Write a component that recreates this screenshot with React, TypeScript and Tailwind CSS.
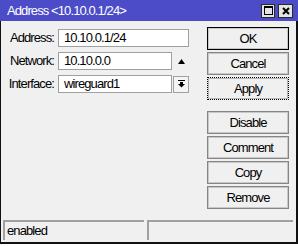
import React from 'react';

const font = "font-['Liberation_Sans',Arial,sans-serif] text-[13px] tracking-[-0.9px] text-black";

const FormRow: React.FC<{ label: string; children: React.ReactNode }> = ({ label, children }) => (
  <>
    <span className="flex h-[18px] items-center justify-end">{label}</span>
    <div className="flex h-[18px] items-center gap-[1px]">{children}</div>
  </>
);

const Field: React.FC<{ value: string; width: string }> = ({ value, width }) => (
  <div className={`flex h-[18px] items-center border border-[#a0a0a0] bg-white pl-[5px] ${width}`}>{value}</div>
);

const Btn: React.FC<{ label: string; kind?: 'default' | 'focus' }> = ({ label, kind }) => {
  let cls = 'border border-[#858585] shadow-[inset_0_0_0_1px_#c8c8c8]';
  if (kind === 'default') cls = 'border border-black shadow-[inset_0_0_0_1px_#c8c8c8]';
  if (kind === 'focus') cls = 'border border-dotted border-black shadow-[inset_0_0_0_1px_#b4b4b4]';
  return (
    <div className={`flex h-[23px] w-[82px] items-center justify-center bg-[#f0f0f0] ${cls}`}>{label}</div>
  );
};

export default function App() {
  return (
    <div className={`h-[246px] w-[298px] bg-white ${font}`}>
      {/* title bar */}
      <div className="flex h-[21px] items-center bg-[#4c4cc8] pl-[7px] pr-[5px]">
        <span className="flex-1 text-white">Address &lt;10.10.0.1/24&gt;</span>
        <div className="flex gap-[3px]">
          <div className="flex h-[14px] w-[14px] items-center justify-center border border-[#2a2a2a] bg-[#e4e4e4]">
            <div className="h-[9px] w-[9px] border border-t-2 border-black" />
          </div>
          <div className="flex h-[14px] w-[15px] items-center justify-center border border-[#2a2a2a] bg-[#e4e4e4]">
            <svg width="8" height="8" viewBox="0 0 8 8">
              <path d="M1 1L7 7M7 1L1 7" stroke="#000" strokeWidth="2" />
            </svg>
          </div>
        </div>
      </div>

      {/* window body */}
      <div className="flex h-[223px] flex-col border-b-2 border-l border-r-2 border-[#111] bg-[#f0f0f0]">
        <div className="flex flex-1">
          <div className="grid grid-cols-[53px_auto] content-start gap-x-[4px] gap-y-[5px] pt-[8px]">
            <FormRow label="Address:">
              <Field value="10.10.0.1/24" width="w-[131px]" />
            </FormRow>
            <FormRow label="Network:">
              <Field value="10.10.0.0" width="w-[114px]" />
              <div className="flex w-[16px] justify-center">
                <svg width="7" height="5" viewBox="0 0 7 5">
                  <polygon points="3.5,0 7,5 0,5" fill="#000" />
                </svg>
              </div>
            </FormRow>
            <FormRow label="Interface:">
              <Field value="wireguard1" width="w-[114px]" />
              <div className="flex h-[17px] w-[16px] items-center justify-center border border-[#a0a0a0] bg-[#f4f4f4]">
                <svg width="7" height="8" viewBox="0 0 7 8">
                  <rect x="0" y="0" width="7" height="1" fill="#000" />
                  <rect x="2" y="2" width="3" height="2" fill="#000" />
                  <polygon points="0,4 7,4 3.5,7.5" fill="#000" />
                </svg>
              </div>
            </FormRow>
          </div>

          <div className="ml-auto mr-[7px] flex flex-col pt-[6px]">
            <div className="flex flex-col gap-[2px]">
              <Btn label="OK" kind="default" />
              <Btn label="Cancel" />
              <Btn label="Apply" kind="focus" />
            </div>
            <div className="mt-[11px] flex flex-col gap-[2px]">
              <Btn label="Disable" />
              <Btn label="Comment" />
              <Btn label="Copy" />
              <Btn label="Remove" />
            </div>
          </div>
        </div>

        {/* status bar */}
        <div className="flex gap-[3px] pb-[2px] pl-[2px] pr-[3px]">
          <div className="flex h-[20px] w-[141px] items-center border-l-2 border-t-2 border-[#a0a0a0] pl-[2px]">enabled</div>
          <div className="h-[20px] flex-1 border-l-2 border-t-2 border-[#a0a0a0]" />
        </div>
      </div>
    </div>
  );
}
